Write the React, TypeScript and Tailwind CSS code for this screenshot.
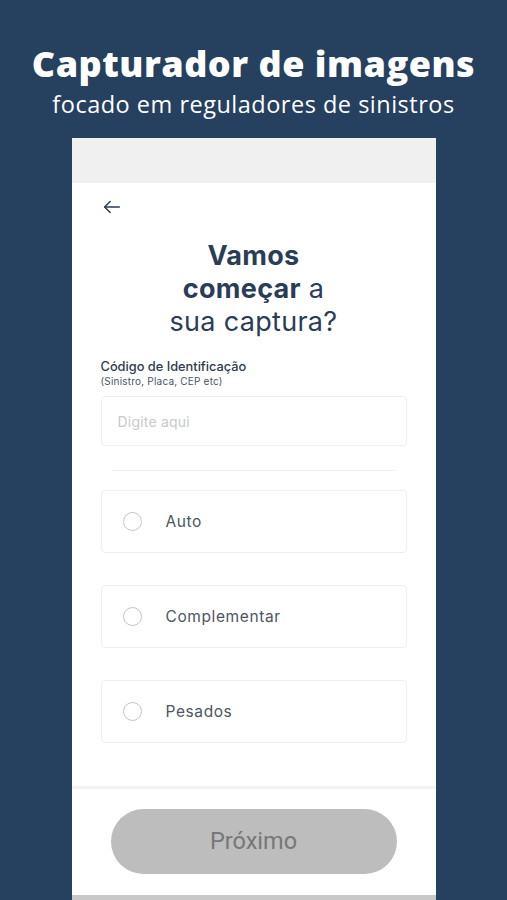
import { useState } from 'react'

const options = ['Auto', 'Complementar', 'Pesados']

export default function App() {
  const [code, setCode] = useState('')
  const [selected, setSelected] = useState<string | null>(null)

  return (
    <div className="flex h-[900px] w-full flex-col items-center overflow-hidden bg-[#26405f]">
      <div className="pt-[42px] text-center text-white" style={{ fontFamily: '"Open Sans", Lato, sans-serif' }}>
        <h1 className="text-[36px] leading-[44px] font-extrabold tracking-[0.5px]">Capturador de imagens</h1>
        <p className="mt-[5px] text-[23.5px] leading-[26px] font-medium tracking-[0.5px]">focado em reguladores de sinistros</p>
      </div>

      <div
        className="mt-[21px] flex w-[364px] flex-1 flex-col bg-white"
        style={{ fontFamily: 'Inter, "Noto Sans", sans-serif' }}
      >
        <div className="h-[45px] bg-[#f0f0f0]" />

        <div className="flex flex-1 flex-col px-[29px]">
          <button type="button" className="mt-[12px] flex h-[24px] w-[24px] items-center text-[#2b3d55]">
            <svg width="22" height="22" viewBox="0 0 24 24" fill="none" stroke="currentColor" strokeWidth="1.6" strokeLinecap="round" strokeLinejoin="round">
              <path d="M20 12H4" />
              <path d="M10 6l-6 6 6 6" />
            </svg>
          </button>

          <h2 className="mt-[20px] text-center text-[27px] leading-[33px] tracking-[0.3px] text-[#2a3d57]">
            <span className="font-bold">Vamos</span>
            <br />
            <span className="font-bold">começar</span> a
            <br />
            sua captura?
          </h2>

          <label htmlFor="code" className="mt-[21px] block text-[12.8px] leading-[16px] font-medium text-[#2f3b4c]">
            Código de Identificação
          </label>
          <span className="text-[10px] leading-[12px] tracking-[0.2px] text-[#4a5565]">(Sinistro, Placa, CEP etc)</span>

          <input
            id="code"
            value={code}
            onChange={(event) => setCode(event.target.value)}
            placeholder="Digite aqui"
            className="mt-[9px] h-[50px] w-full rounded-[4px] border border-[#eeeeee] px-[16px] text-[14px] tracking-[0.2px] text-[#2f3b4c] placeholder:text-[#c9c9c9] focus:outline-none"
          />

          <div className="mx-[11px] mt-[24px] h-px bg-[#efefef]" />

          <div className="mt-[19px] flex flex-col gap-[32px]">
            {options.map((option) => (
              <button
                key={option}
                type="button"
                onClick={() => setSelected(option)}
                className="flex h-[63px] w-full items-center rounded-[4px] border border-[#eeeeee] text-left"
              >
                <span className="ml-[21px] flex h-[19px] w-[19px] items-center justify-center rounded-full border-[1.5px] border-[#c4c4c4]">
                  {selected === option ? <span className="h-[9px] w-[9px] rounded-full bg-[#2a3d57]" /> : null}
                </span>
                <span className="ml-[24px] text-[15.5px] tracking-[0.6px] text-[#4b5563]">{option}</span>
              </button>
            ))}
          </div>
        </div>

        <div className="mt-[43px] h-[3px] bg-[#f3f3f3]" />

        <div className="flex justify-center pt-[20px] pb-[21px]">
          <button
            type="button"
            disabled={!selected || !code}
            className="h-[65px] w-[286px] rounded-full bg-[#bdbdbd] text-[23.5px] text-[#777777]"
            style={{ fontFamily: 'Roboto, "Noto Sans", sans-serif' }}
          >
            Próximo
          </button>
        </div>

        <div className="h-[5px] bg-[#c8c8c8]" />
      </div>
    </div>
  )
}
